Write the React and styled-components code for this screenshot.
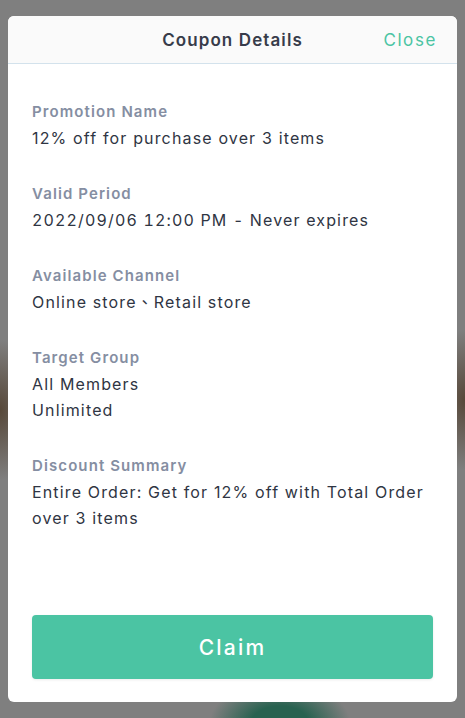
import React from 'react';
import styled, { createGlobalStyle } from 'styled-components';

const GlobalStyle = createGlobalStyle`
  html, body {
    margin: 0;
    padding: 0;
    height: 100%;
  }
  body {
    font-family: Inter, "Noto Sans", "Noto Sans CJK TC", sans-serif;
    background-color: #7f7f7f;
    background-image:
      radial-gradient(ellipse 40px 70px at 0px 410px, rgba(80, 62, 45, 0.85), rgba(127, 127, 127, 0) 100%),
      radial-gradient(ellipse 40px 70px at 465px 400px, rgba(80, 62, 45, 0.85), rgba(127, 127, 127, 0) 100%),
      radial-gradient(ellipse 70px 40px at 280px 722px, rgba(40, 98, 80, 1) 40%, rgba(127, 127, 127, 0) 100%);
  }
`;

const Page = styled.div`
  box-sizing: border-box;
  height: 718px;
  padding: 16px 8px;
  display: flex;
`;

const Modal = styled.div`
  flex: 1;
  display: flex;
  flex-direction: column;
  background: #fff;
  border-radius: 6px;
  overflow: hidden;
`;

const Header = styled.div`
  height: 48px;
  flex: 0 0 48px;
  display: grid;
  grid-template-columns: 1fr auto 1fr;
  align-items: center;
  background: #fafafa;
  border-bottom: 1px solid #d3e2ec;
  box-sizing: border-box;
  padding: 0 20px;
`;

const Title = styled.div`
  grid-column: 2;
  font-size: 17px;
  font-weight: 600;
  color: #373c4a;
  letter-spacing: 1.1px;
`;

const CloseButton = styled.button`
  justify-self: end;
  border: none;
  background: none;
  padding: 0;
  font-family: inherit;
  font-size: 17px;
  color: #4bc4a3;
  letter-spacing: 1.6px;
  cursor: pointer;
`;

const Body = styled.div`
  flex: 1;
  padding: 35px 24px 0;
  display: flex;
  flex-direction: column;
  gap: 30px;
`;

const Section = styled.div`
  display: flex;
  flex-direction: column;
`;

const Label = styled.div`
  font-size: 15px;
  line-height: 26px;
  font-weight: 600;
  color: #858ea2;
  letter-spacing: 1.1px;
`;

const Value = styled.div`
  font-size: 16px;
  line-height: 26px;
  color: #2f3543;
  letter-spacing: 1.15px;
  font-variant-numeric: ${p => (p.$numeric ? 'tabular-nums' : 'normal')};
`;

const Footer = styled.div`
  padding: 0 24px 23px;
`;

const ClaimButton = styled.button`
  width: 100%;
  height: 64px;
  border: none;
  border-radius: 4px;
  background: #4bc4a3;
  color: #fff;
  font-family: inherit;
  font-size: 21px;
  font-weight: 500;
  letter-spacing: 2.2px;
  box-shadow: 0 1px 3px rgba(0, 0, 0, 0.08);
  cursor: pointer;
`;

const details = [
  { label: 'Promotion Name', lines: ['12% off for purchase over 3 items'] },
  { label: 'Valid Period', lines: ['2022/09/06 12:00 PM - Never expires'], numeric: true },
  { label: 'Available Channel', lines: ['Online store、Retail store'] },
  { label: 'Target Group', lines: ['All Members', 'Unlimited'] },
  { label: 'Discount Summary', lines: ['Entire Order: Get for 12% off with Total Order over 3 items'] },
];

export default function App() {
  return (
    <>
      <GlobalStyle />
      <Page>
        <Modal>
          <Header>
            <Title>Coupon Details</Title>
            <CloseButton>Close</CloseButton>
          </Header>
          <Body>
            {details.map(d => (
              <Section key={d.label}>
                <Label>{d.label}</Label>
                {d.lines.map(line => <Value key={line} $numeric={d.numeric}>{line}</Value>)}
              </Section>
            ))}
          </Body>
          <Footer>
            <ClaimButton>Claim</ClaimButton>
          </Footer>
        </Modal>
      </Page>
    </>
  );
}
